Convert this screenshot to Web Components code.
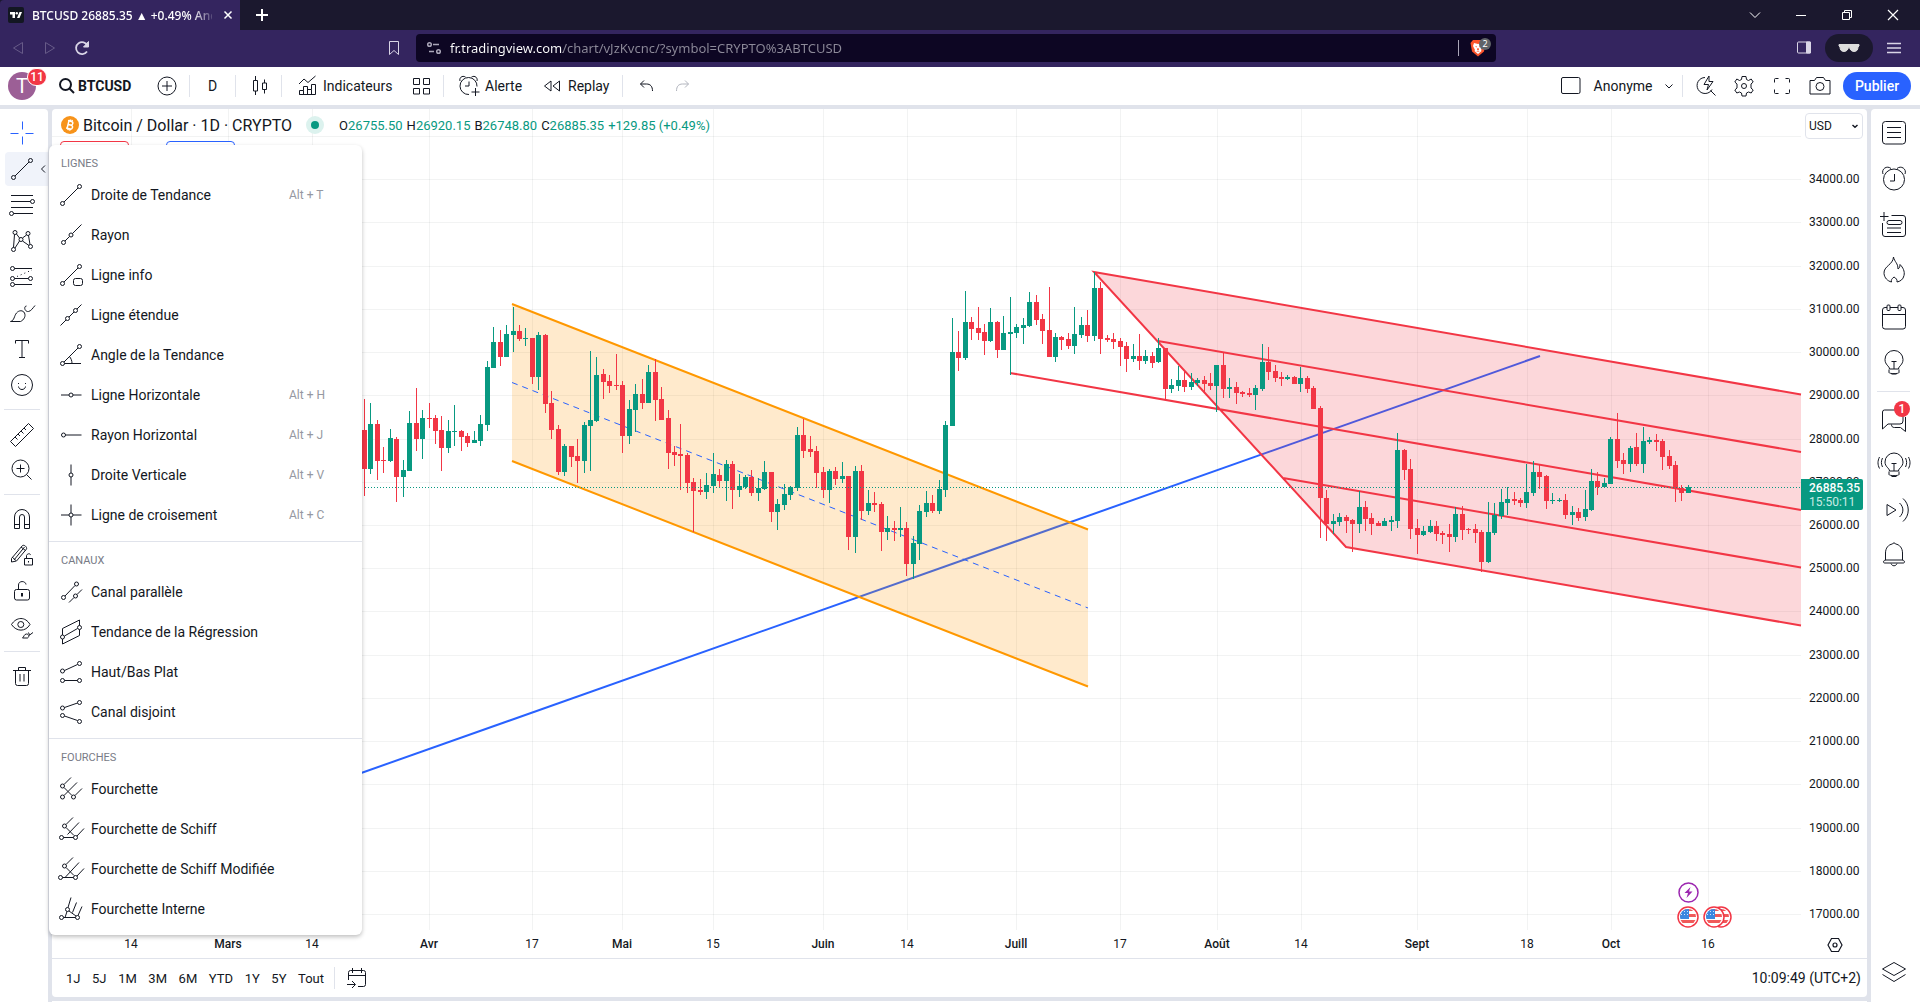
<!DOCTYPE html>
<html lang="fr">
<head>
<meta charset="utf-8">
<title>BTCUSD 26885.35 ▲ +0.49% Anonyme</title>
<style>
  html, body { margin: 0; height: 100%; }
  body {
    --ink: #131722; --line: #e0e3eb; --up: #089981; --down: #f23645; --blue: #2962ff;
    font-family: Roboto, "Liberation Sans", sans-serif; font-size: 14px; color: var(--ink);
    background: var(--line); overflow: hidden;
  }
</style>
</head>
<body>
<app-shell>
  <browser-tabs slot="top"></browser-tabs>
  <browser-bar slot="top"></browser-bar>
  <chart-header slot="top"></chart-header>
  <tool-rail slot="left"></tool-rail>
  <price-chart slot="main"></price-chart>
  <range-bar slot="main"></range-bar>
  <side-rail slot="right"></side-rail>
  <tool-menu slot="overlay">
    <menu-group heading="Lignes">
      <menu-entry icon="line" keys="Alt + T">Droite de Tendance</menu-entry>
      <menu-entry icon="ray">Rayon</menu-entry>
      <menu-entry icon="info">Ligne info</menu-entry>
      <menu-entry icon="extended">Ligne étendue</menu-entry>
      <menu-entry icon="angle">Angle de la Tendance</menu-entry>
      <menu-entry icon="hline" keys="Alt + H">Ligne Horizontale</menu-entry>
      <menu-entry icon="hray" keys="Alt + J">Rayon Horizontal</menu-entry>
      <menu-entry icon="vline" keys="Alt + V">Droite Verticale</menu-entry>
      <menu-entry icon="crossline" keys="Alt + C">Ligne de croisement</menu-entry>
    </menu-group>
    <menu-group heading="Canaux">
      <menu-entry icon="parallel">Canal parallèle</menu-entry>
      <menu-entry icon="regression">Tendance de la Régression</menu-entry>
      <menu-entry icon="flat">Haut/Bas Plat</menu-entry>
      <menu-entry icon="disjoint">Canal disjoint</menu-entry>
    </menu-group>
    <menu-group heading="Fourches">
      <menu-entry icon="fork">Fourchette</menu-entry>
      <menu-entry icon="schiff">Fourchette de Schiff</menu-entry>
      <menu-entry icon="schiffmod">Fourchette de Schiff Modifiée</menu-entry>
      <menu-entry icon="inside">Fourchette Interne</menu-entry>
    </menu-group>
  </tool-menu>
</app-shell>

<script>
const c = (x, y, r = 2) => `<circle cx="${x}" cy="${y}" r="${r}"/>`;
const p = d => `<path d="${d}"/>`;

/* Icons on a 28 unit square, drawn with a one unit stroke in the current colour. */
const ICONS = {
  line: c(5.5,22.5) + c(22.5,5.5) + p('M7 21 21 7'),
  ray: c(6.5,21.5) + c(14,14) + p('M8 20l4.5-4.5M15.500 12.500 24.500 3.500'),
  info: c(5.5,22.5) + c(22.5,5.5) + p('M7 21 21 7') + '<rect x="16.500" y="17.500" width="9" height="7" rx="2"/>',
  extended: c(10.5,17.5) + c(18.5,9.5) + p('M3.500 24.500 9 19M12 16l5-5M20 8l4.500-4.500'),
  angle: c(5.5,22.5) + c(22.5,5.5) + p('M7 21 21 7M7.500 22.500H24M15 22.500c0-3-1-5-2.500-7'),
  hline: c(14,14) + p('M4 14h8M16 14h8.500'),
  hray: c(6.5,14) + p('M8.500 14h16'),
  vline: c(14,14) + p('M14 3.500V12M14 16v8.500'),
  crossline: c(14,14) + p('M14 3.500V12M14 16v8.500M4 14h8M16 14h8.500'),
  parallel: c(6.5,19.5) + c(19.5,6) + c(18.5,18) + p('M8 18 18 7.500M12 24.500 17 19.500M20 16.500l5-5'),
  regression: c(5.5,19) + c(22.5,9.5) + p('M5.500 17v-6.500l17-8.500v5.500M22.500 11.500v6l-17 8.500v-5M7.500 18l13-7.500'),
  flat: c(5.5,13) + c(22.5,5.5) + c(5.5,22.5) + c(22.5,22.5) + p('M7.500 12.500 20.500 6.500M7.500 22.500h13'),
  disjoint: c(5.5,10) + c(22.5,4.5) + c(5.5,17.5) + c(22.5,23.5) + p('M7.500 9.500 20.500 5M7.500 18 20.500 22.500'),
  fork: c(5.5,11) + c(5.5,22) + c(16.5,22) + p('M7 9.500 14 2.500M7 12.500l8 8M7 20.500 20 7.500M18 20.500l7-7'),
  schiff: c(7.5,11) + c(4.5,22.5) + c(18.5,22.5) + p('M9 9.500 16 2.500M9 12.500l8 8M6.500 22.500h10M10.500 19.500 22 7.500M20 21l7-7.500'),
  schiffmod: c(7.5,11) + c(3.5,22.5) + c(18.5,22.5) + p('M9 9.500 16 2.500M9 12.500l8 8M5.500 22.500h11M8.500 22 22 7.500M20 21l7-7.500'),
  inside: c(10.5,14.5) + c(4.5,22.5) + c(20.5,22.5) + p('M11 12.500 14 2.500M12 16l7 5M6.500 22.500h12M8 22.500 10 16.500M15.500 17.500l4-10M21 20.500l4-9'),
  crosshair: p('M14.500 2.500v8M14.500 17.500v8M2.500 14.500h8M17.500 14.500h8'),
  fib: c(24.500,10.500) + c(3.500,22.500) + p('M3 4.500h22M3 10.500h19.500M3 16.500h22M5.500 22.500H25'),
  pattern: c(7,5.5) + c(20,6.5) + c(5.5,22.5) + c(22.5,19.500) + c(13,12.500) + p('M6.500 7.500 5.500 20.500M8.500 7 11.500 11M14.500 11 18.500 8M20.500 8.500 22 17.500M7 21 11.500 14M14.500 14 21 18.500'),
  forecast: c(4.5,5.5) + c(4.5,15.5) + c(4.5,21.5) + c(22.5,15.5) + p('M6.500 5.500H24M6.500 15.500H20.500M6.500 21.500H24') + '<path stroke-dasharray="1 3" d="M9 13.500 24 7"/>',
  brush: p('M2.500 22.500c4-1 3.500-5.500 6-8.500 2.500-3 6.500-3 8 0 1.500 3-.5 7-4 8.500zM27 6.500c-2.500 3-4 5.500-6.500 6s-4.500-2.500-3.500-4.500c.3-.7.7-1 1.500-1'),
  text: p('M7.500 8.500v-3h13v3M14 5.500v17M11 22.500h6'),
  smile: c(14,14,10.500) + p('M10.500 15.500c.5 4 6.500 4 7 0M10.500 12v1M17.500 12v1'),
  ruler: p('M2.500 21.500 20.500 3.500l5 5-18 18zM7 17l2.500 2.500M10 14l2 2M13 11l2.500 2.500M16 8l2 2'),
  zoom: c(12.5,12.5,8.5) + p('M12.500 8.500v8M8.500 12.500h8M18.500 18.500l5 5'),
  magnet: p('M6.500 23.500V12a7.500 7.500 0 0 1 15 0v11.500h-5V12a2.500 2.500 0 0 0-5 0v11.500zM6.500 19.500h5M16.500 19.500h5'),
  pencillock: p('M3.500 17.500 14.500 4.500c1.500-1 5 1.500 4 3.500L8.500 20l-5 1zM6 19 16.500 6M4 16l4 3.500M13 6l4.500 3.500M16.500 17.500h8v6.500h-8zM18.500 17.500v-3c1-2.500 4-2 4-.5M20.500 20v1.500'),
  lock: p('M10.500 12.500V8c0-4.500 7-4.500 7.500-.5') + '<rect x="6.500" y="12.500" width="15" height="10.500" rx="2"/><path stroke-width="2" d="M14 16v3.500"/>',
  eye: p('M3.500 11.500c5-8 14-8 18.500 0-4.500 7.500-13.500 7.500-18.500 0z') + c(12.8,11.500,3) + p('M14.500 25c1.500-1 1.500-4 4-4s3 3 1 4zM25 19.500l-4 3M20.500 19.500l1 2.500'),
  trash: p('M5 8.500h18M7.500 8.500v13a2 2 0 0 0 2 2h9a2 2 0 0 0 2-2v-13M10.500 8.500v-3h7v3M12 12v7.500M16 12v7.500'),
  search: '<g stroke-width="2">' + c(12.500,12.500,5.5) + p('M16.500 16.500l4.500 4.500') + '</g>',
  plus: c(14,14,9) + p('M14 9v10M9 14h10'),
  candles: p('M10.500 4v4.500M10.500 19v4M8.500 8.500h4v10.500h-4zM19.500 7.500v3.500M19.500 17.500v4M17.500 11h4v6.500h-4z'),
  indicators: p('M6 12l5-5 4 3.500L22.500 4M6.500 22.500v-4h4v4zM10.500 18.500v-4h4v8M14.500 17.500h4v5M18.500 17.500v-5h4v10H6.500'),
  grid: p('M6.500 6.500h6v6h-6zM16.500 6.500h6v6h-6zM6.500 16.500h6v5.500h-6zM16.500 16.500h6v5.500h-6z'),
  alert: p('M22 14.500A8.500 8.500 0 1 0 14 22.500M5 9c-1-3 2-6 5.500-4M22 9c1-3-2-6-5.500-4M14 9.500V14h-4M20.500 16v8M16.500 20h8'),
  replay: p('M13 9v10l-6.500-5zM21.500 9v10L15 14z'),
  undo: p('M12 8.500 8.500 12l3.500 3.500M8.500 12h6c4 0 6 2.500 6 7'),
  redo: p('M16 8.500l3.500 3.500-3.500 3.500M19.500 12h-6c-4 0-6 2.500-6 7'),
  layout: '<rect x="4.500" y="5.500" width="18.500" height="16" rx="1.500"/>',
  down: p('M10.500 12.500 14 16l3.500-3.500'),
  quick: p('M13 5.500a8 8 0 1 0 7 12M18.500 18.500l5 5M17 4l-5 8.500h4.500L15 18l6-8.500h-4z'),
  gear: p('M12 4.500h4l.5 3 2 1 2.700-1.500 2 3L21 12v4l2.200 2-2 3-2.700-1-2 1-.5 3h-4l-.5-3-2-1-2.700 1-2-3L7 16v-4L4.800 10l2-3 2.700 1.500 2-1z') + c(14,14,2.5),
  full: p('M10.500 6.500h-3a1 1 0 0 0-1 1v3M17.500 6.500h3a1 1 0 0 1 1 1v3M10.500 21.500h-3a1 1 0 0 1-1-1v-3M17.500 21.500h3a1 1 0 0 0 1-1v-3'),
  camera: p('M4 8.500h4.500l2-3h7l2 3H24v13.500H4z') + c(14,14.5,4),
  list: '<rect x="2.500" y="2.500" width="23" height="22.500" rx="3"/>' + p('M7 8.500h14M7 13.500h14M7 18.500h14'),
  alarm: c(14,14.5,10.5) + p('M14.500 9v7H10M3 9c-2-5 4-9 8-5.500M25 9c2-5-4-9-8-5.500'),
  watch: p('M11.500 4.500H23a2.500 2.500 0 0 1 2.500 2.500v16a2.500 2.500 0 0 1-2.500 2.500H5A2.500 2.500 0 0 1 2.500 23V12M4 1v9M0 5.500h8.500M7 17h14M7 21.500h14') + '<rect x="7" y="9.500" width="15" height="4" rx="2"/>',
  flame: p('M13.500 0c1 5 4.500 6 4.500 12 1.500-1 2-2 2-4.500 3 3 5 7 4 11-.7 4-4 6-7 6.500.5-2-1-4-3-5-2.500 2-3 3-2.500 5-4-1-7-4-7.500-8.500C3.500 9 13 8 13.500 0z'),
  calendar: '<rect x="2.500" y="4.500" width="23" height="21.500" rx="2.500"/>' + p('M2.500 11.500h23') + '<g fill="#fff"><rect x="7" y="2" width="3" height="5.500" rx="1"/><rect x="18" y="2" width="3" height="5.500" rx="1"/></g>',
  bulb: p('M9.500 20c0-3-4.500-4-4.500-9.500a9 9 0 0 1 18 0c0 5.500-4.500 6.500-4.500 9.500zM9 20.500v3c0 1.500 10 1.500 10 0v-3M11.500 25h5M14 12.500V20M11.500 12.500h5'),
  chat: p('M2.500 23V6a2 2 0 0 1 2-2H21a2 2 0 0 1 2 2v9a3 3 0 0 1-3 3H8zM11.500 18.500c0 2 1 3 3 3h6l5 4V11'),
  stream: p('M9.500 20c0-3-4.500-4-4.500-9a9 9 0 0 1 18 0c0 5-4.500 6-4.500 9zM9 20.500v3c0 1.500 10 1.500 10 0v-3M11.500 25.500h5M14 12.500V20M11.500 12.500h5M2.500 7c-1.500 3-1.500 6 0 9M25.500 7c1.500 3 1.500 6 0 9M-.5 6c-2 4-2 7.500 0 11.500M28.500 6c2 4 2 7.500 0 11.500'),
  cast: p('M7 8.500v11l9-5.500zM19.500 7c4.500 4 4.500 10 0 14M23 2.500c7 6 7 17 0 23'),
  bell: p('M5.500 19V12c0-5 3-8.500 7-9 .5-1.500 2.500-1.500 3 0 4 .5 7 4 7 9v7M6 19h16c3 0 3 3 1.500 3H4.500C3 22 3 19 6 19zM11 22.500c1 3 5 3 6 0'),
  layers: p('M14 3.500 25.500 10 14 16.500 2.500 10zM2.500 15.500 14 22.500l11.500-7'),
  goto: p('M5.500 16V8.500a2 2 0 0 1 2-2h13a2 2 0 0 1 2 2v12a2 2 0 0 1-2 2H15M5.500 11.500h17M9.500 4v5M18.500 4v5M4 20.500h8M9 17l3.500 3.500L9 24'),
  bookmark: p('M9.500 7.500h9v13l-4.500-4-4.500 4z'),
  back: p('M18.500 8.500v11L9.500 14z'),
  forward: p('M9.500 8.500v11l9-5.500z'),
  reload: '<path stroke-width="1.800" d="M19 17.500a6 6 0 1 1 .5-6"/><path fill="currentColor" d="M20.500 7.500v5.500h-5z"/>',
  tune: '<g stroke-width="1.500">' + c(9.500,10.500,1.800) + c(18.500,17.500,1.800) + p('M13 10.500h6M9 17.500h5') + '</g>',
  panel: '<rect x="7.500" y="8" width="13" height="11" rx="1"/><path fill="currentColor" d="M16.500 8h4v11h-4z"/>',
  burger: '<path stroke-width="1.300" d="M7 9.500h14M7 14h14M7 18.500h14"/>',
  glasses: '<path fill="currentColor" d="M4 10.500h20v1.500l-1 1c0 3-1.500 4.500-4 4.500s-4-2-4.500-4h-1c-.5 2-2 4-4.500 4s-4-1.500-4-4.500l-1-1z"/>',
  chevron: p('M9 11.500l5 5 5-5'),
  minimize: p('M9 14.500h10'),
  restore: p('M9.500 11.500h7v7h-7zM11.500 11.500v-2h7v7h-2'),
  close: '<path stroke-width="1.200" d="M9 9l10 10M19 9 9 19"/>',
  closetab: '<path stroke-width="1.500" d="M10.500 10.500l7 7M17.500 10.500l-7 7"/>',
  newtab: '<path stroke-width="2" d="M14 8v12M8 14h12"/>',
  arrowleft: p('M16 10.500 12.500 14l3.500 3.500'),
  hexgear: '<g stroke-width="1.200">' + p('M10.500 7.500h7L21 14l-3.500 6.500h-7L7 14z') + c(14,14,2) + '</g>'
};

const RESET = `
  button { font: inherit; color: inherit; background: none; border: 0; padding: 0; margin: 0; cursor: pointer;
    display: flex; align-items: center; justify-content: center; white-space: nowrap; }
`;

function define(name, render) {
  customElements.define(name, class extends HTMLElement {
    connectedCallback() {
      if (this.shadowRoot) return;
      this.attachShadow({ mode: 'open' }).innerHTML = render(this);
    }
  });
}

define('ui-icon', el => `
  <style>:host { display: block; flex: none; width: 28px; height: 28px; } svg { display: block; overflow: visible; }</style>
  <svg width="28" height="28" viewBox="0 0 28 28" fill="none" stroke="currentColor" aria-hidden="true">${ICONS[el.getAttribute('name')]}</svg>`);

const icon = name => `<ui-icon name="${name}"></ui-icon>`;
const iconButton = (name, label, cls = '') => `<button class="${cls}" aria-label="${label}">${icon(name)}</button>`;

define('app-shell', () => `
  <style>
    :host { display: flex; flex-direction: column; height: 100vh; position: relative; }
    .body { flex: 1; display: flex; gap: 4px; padding-top: 4px; min-height: 0; }
    .main { flex: 1; min-width: 0; display: flex; flex-direction: column; }
    .next { margin-top: 4px; height: 1px; background: #fff; }
  </style>
  <slot name="top"></slot>
  <div class="body">
    <slot name="left"></slot>
    <div class="main"><slot name="main"></slot><div class="next"></div></div>
    <slot name="right"></slot>
  </div>
  <slot name="overlay"></slot>`);

define('browser-tabs', () => `
  <style>${RESET}
    :host { display: flex; height: 30px; background: #1b182e; color: #fff; font-family: "Noto Sans", sans-serif; font-size: 12px; }
    .tab { width: 240px; box-sizing: border-box; background: #34255f; padding-left: 8px; display: flex; align-items: center; border-radius: 4px 0 0 0; }
    .tab svg { flex: none; }
    .title { margin-left: 8px; width: 180px; white-space: nowrap; font-weight: 500;
      -webkit-mask-image: linear-gradient(90deg, #000 160px, transparent 184px); }
    .tab button { width: 24px; margin-left: auto; }
    .new { width: 44px; }
    .win { margin-left: auto; display: flex; padding-right: 4px; }
    .win button { width: 46px; }
  </style>
  <div class="tab">
    <svg width="16" height="16" viewBox="0 0 16 16" aria-hidden="true"><rect width="16" height="16" rx="2" fill="#131722"/><path fill="#fff" d="M2 5h5v6H4.500V7.500H2zM11.500 5H14l-2.500 6H9z"/><circle cx="8.800" cy="6.200" r="1.200" fill="#fff"/></svg>
    <span class="title">BTCUSD 26885.35 ▲ +0.49% Anc</span>
    ${iconButton('closetab', 'Fermer l’onglet')}
  </div>
  ${iconButton('newtab', 'Nouvel onglet', 'new')}
  <div class="win">${iconButton('chevron', 'Rechercher')}${iconButton('minimize', 'Réduire')}${iconButton('restore', 'Restaurer')}${iconButton('close', 'Fermer')}</div>`);

define('browser-bar', () => `
  <style>${RESET}
    :host { display: flex; align-items: center; height: 37px; background: #34255f; color: #d9d5e6; font-family: "Noto Sans", sans-serif; font-size: 13px; padding: 0 5px 2px 2px; box-sizing: border-box; }
    button { width: 32px; height: 28px; }
    .dim { color: #675b88; }
    .mark { margin-left: auto; width: 44px; }
    .url { width: 1080px; height: 28px; border-radius: 4px; background: #0d0623; display: flex; align-items: center; box-sizing: border-box; padding: 0 10px 0 4px; margin-right: 18px; color: #aaa6b8; }
    input { flex: 1; min-width: 0; border: 0; outline: 0; padding: 0 0 0 2px; font: inherit; color: #8d8a99;
      background: linear-gradient(90deg, #fff 115px, #8d8a99 115px); -webkit-background-clip: text; background-clip: text; -webkit-text-fill-color: transparent; }
    .sep { width: 1px; height: 16px; background: #aaa6b8; margin-right: 11px; }
    .shield { position: relative; width: 16px; height: 18px; }
    .shield b { position: absolute; left: 9px; top: -1px; width: 12px; height: 12px; border-radius: 6px; background: #5f6368; color: #fff; font: 9px/12px "Noto Sans", sans-serif; text-align: center; }
    .right { margin-left: auto; display: flex; align-items: center; }
    .pill { width: 48px; border-radius: 14px; background: #1b182e; color: #ddd; margin: 0 0 0 5px; }
    .right .menu { width: 42px; }
  </style>
  ${iconButton('back', 'Précédent', 'dim')}${iconButton('forward', 'Suivant', 'dim')}${iconButton('reload', 'Recharger')}
  ${iconButton('bookmark', 'Favori', 'mark')}
  <div class="url">${icon('tune')}<input aria-label="Adresse" value="fr.tradingview.com/chart/vJzKvcnc/?symbol=CRYPTO%3ABTCUSD">
    <span class="sep"></span>
    <button class="shield" aria-label="Brave Shields"><svg width="16" height="18" viewBox="0 0 16 18"><path fill="#fb542b" d="M3 1h10l2.500 3L14 12.500 8 17.500 2 12.500.5 4z"/><path fill="#fff" d="M4 4l4 1 4-1 1 3-2 4 .5 1L8 15l-3.500-3L5 11 3 7z"/><path fill="#fb542b" d="M5 7l2 .5-.5 1zM11 7l-2 .5.5 1zM7.500 9h1l.5 2-1 .5-1-.5zM6 12l2 1 2-1-2 .3z"/></svg><b>2</b></button>
  </div>
  <div class="right">${iconButton('panel', 'Panneau')}${iconButton('glasses', 'Navigation privée', 'pill')}${iconButton('burger', 'Menu', 'menu')}</div>`);

define('chart-header', () => `
  <style>${RESET}
    :host { display: flex; align-items: center; height: 38px; background: #fff; box-sizing: border-box; padding-right: 9px; }
    button { height: 38px; width: 45px; }
    i { width: 1px; height: 22px; background: var(--line); flex: none; }
    .avatar { position: relative; width: 48px; justify-content: flex-start; padding-left: 8px; box-sizing: border-box; }
    .avatar span { width: 28px; height: 28px; border-radius: 14px; background: #9c5f96; color: #fff; font-size: 20px; line-height: 28px; text-align: center; }
    .avatar b { position: absolute; left: 27px; top: 1px; width: 18px; height: 16px; border-radius: 9px; background: var(--down); color: #fff; font-size: 12px; line-height: 16px; font-weight: 500; border: 1px solid #fff; }
    .search { width: 96px; padding-left: 5px; box-sizing: border-box; justify-content: flex-start; font-weight: 700; }
    .search ui-icon { margin-right: -3px; }
    .left { justify-content: flex-start; box-sizing: border-box; padding-left: 11px; gap: 2px; }
    .ind { width: 116px; } .al { width: 86px; } .rp { width: 92px; padding-left: 8px; }
    .redo { width: 30px; color: #b2b5be; }
    .right { margin-left: auto; display: flex; align-items: center; }
    .right button { width: 38px; }
    .right .name { width: 66px; }
    .right .drop { width: 26px; }
    .right .pub { width: 68px; height: 28px; border-radius: 14px; background: var(--blue); color: #fff; font-weight: 500; margin-left: 4px; }
    .right i { margin: 0 4px 0 0; }
  </style>
  <button class="avatar" aria-label="Compte"><span>T</span><b>11</b></button>
  <button class="search">${icon('search')}BTCUSD</button>
  ${iconButton('plus', 'Comparer')}<i></i><button>D</button><i></i>${iconButton('candles', 'Bougies')}<i></i>
  <button class="left ind">${icon('indicators')}Indicateurs</button>${iconButton('grid', 'Modèles')}<i></i>
  <button class="left al">${icon('alert')}Alerte</button><button class="left rp">${icon('replay')}Replay</button><i></i>
  ${iconButton('undo', 'Annuler')}${iconButton('redo', 'Rétablir', 'redo')}
  <div class="right">${iconButton('layout', 'Disposition')}<button class="name">Anonyme</button>${iconButton('down', 'Gérer', 'drop')}<i></i>
    ${iconButton('quick', 'Recherche rapide')}${iconButton('gear', 'Réglages')}${iconButton('full', 'Plein écran')}${iconButton('camera', 'Capture')}
    <button class="pub">Publier</button></div>`);

define('tool-rail', () => `
  <style>${RESET}
    :host { display: flex; flex-direction: column; width: 48px; background: #fff; border-radius: 0 4px 0 0; box-sizing: border-box; padding-top: 6px; }
    button { height: 36px; width: 44px; flex: none; }
    .active { width: 43px; height: 34px; margin: 1px 0 1px 5px; border-radius: 4px 0 0 4px; background: #f0f3fa; justify-content: flex-start; padding-left: 3px; box-sizing: border-box; }
    .active ui-icon + ui-icon { margin-left: -7px; }
    .cross { color: var(--blue); }
    i { height: 1px; margin: 6px 8px 6px 4px; background: var(--line); flex: none; }
  </style>
  ${iconButton('crosshair', 'Curseur', 'cross')}
  <button class="active" aria-label="Outils de ligne">${icon('line')}${icon('arrowleft')}</button>
  ${[['fib','Fibonacci'],['pattern','Figures'],['forecast','Prévision'],['brush','Pinceau'],['text','Texte'],['smile','Icônes']].map(a => iconButton(...a)).join('')}
  <i></i>${iconButton('ruler', 'Mesurer')}${iconButton('zoom', 'Zoomer')}<i></i>
  ${[['magnet','Aimant'],['pencillock','Mode dessin'],['lock','Verrouiller'],['eye','Masquer']].map(a => iconButton(...a)).join('')}
  <i></i>${iconButton('trash', 'Supprimer')}`);

define('side-rail', () => `
  <style>${RESET}
    :host { display: flex; flex-direction: column; width: 49px; background: #fff; border-radius: 4px 0 0 0; box-sizing: border-box; padding: 1px 0 7px; }
    button { height: 46px; width: 46px; flex: none; position: relative; }
    i { height: 1px; margin: 5px 10px 5px 6px; background: var(--line); flex: none; }
    i ~ button { height: 45px; }
    .last { margin-top: auto; }
    b { position: absolute; left: 23px; top: 4px; width: 16px; height: 16px; border-radius: 8px; background: var(--down); color: #fff; font-size: 12px; line-height: 16px; font-weight: 500; }
  </style>
  ${[['list','Liste de suivi'],['alarm','Alertes'],['watch','Données'],['flame','Tendances'],['calendar','Calendrier'],['bulb','Idées']].map(a => iconButton(...a)).join('')}
  <i></i>
  <button aria-label="Discussions">${icon('chat')}<b>1</b></button>
  ${[['stream','Flux d’idées'],['cast','Diffusions'],['bell','Notifications'],['layers','Arbre des objets','last']].map(a => iconButton(...a)).join('')}`);

define('tool-menu', () => `
  <style>
    :host { display: block; position: absolute; left: 49px; top: 145px; width: 313px; box-sizing: border-box; background: #fff; border-radius: 6px; box-shadow: 0 2px 4px rgba(0,0,0,.25); }
  </style>
  <slot></slot>`);

define('menu-group', el => `
  <style>
    :host { display: block; padding: 6px 0; border-top: 1px solid var(--line); }
    :host(:first-child) { border-top: 0; }
    h3 { margin: 0; padding: 2px 0 0 12px; font-size: 11px; line-height: 22px; font-weight: 400; color: #787b86; text-transform: uppercase; }
  </style>
  <h3>${el.getAttribute('heading')}</h3><slot></slot>`);

define('menu-entry', el => `
  <style>${RESET}
    :host { display: block; }
    button { width: 100%; height: 40px; padding: 0 37px 0 8px; justify-content: flex-start; gap: 6px; text-align: left; }
    span { flex: 1; }
    kbd { font: inherit; font-size: 12px; color: #9598a1; width: 36px; }
  </style>
  <button>${icon(el.getAttribute('icon'))}<span><slot></slot></span>${el.hasAttribute('keys') ? `<kbd>${el.getAttribute('keys')}</kbd>` : ''}</button>`);

define('range-bar', () => `
  <style>${RESET}
    :host { display: flex; align-items: center; height: 38px; border-top: 1px solid var(--line); background: #fff; border-radius: 0 0 4px 4px; padding: 0 6px 0 8px; font-size: 13px; }
    .ranges { display: flex; width: 258px; padding-left: 6px; justify-content: space-between; }
    .ranges button { height: 30px; }
    i { width: 1px; height: 22px; margin: 0 8px 0 10px; background: var(--line); }
    .clock { margin-left: auto; font-size: 14px; }
  </style>
  <div class="ranges">${['1J','5J','1M','3M','6M','YTD','1Y','5Y','Tout'].map(t => `<button>${t}</button>`).join('')}</div>
  <i></i>${iconButton('goto', 'Aller à')}
  <button class="clock">10:09:49 (UTC+2)</button>`);

/* Candles: high, body top, body bottom, low, in thirds of a pixel below the base of each run; R falls, G rises. */
const RUNS = [
  [280, `357,450,567,648R 369,432,567,582G 420,432,543,600R 501,540,543,579R 447,474,543,546G 471,477,591,666R 540,570,591,651G 393,429,573,573G 324,429,477,513R 390,414,477,537G
  369,414,417,444R 405,414,453,492R 408,450,504,573R 420,453,504,519G 375,453,456,498G 450,453,471,513R 459,468,489,501R 453,480,489,489G 405,432,483,498G 243,261,435,453G
  141,186,264,264G 150,186,231,258R 135,162,231,231G 81,153,165,216G 135,153,177,183R 144,174,177,198G 174,174,291,312R 156,165,291,330G 162,165,372,399R 333,369,450,477R
  435,447,576,585R 492,498,576,588G 498,498,531,561R 477,528,543,609R 426,435,543,579G 213,420,438,573G 231,285,423,426G 267,282,306,357R 285,303,318,339R 222,315,318,330R
  303,315,468,519R 360,387,468,492G 312,342,390,456G 297,342,369,387R 255,276,369,369G 237,276,360,423R 321,357,420,420R 390,414,519,567R 498,516,525,558R 432,522,528,630R 519,525,609,639R`],
  [340, `414,426,453,576R 417,450,456,465R 399,435,456,477G 339,402,438,459G 387,405,423,444R 360,372,423,483G 363,372,450,507R 402,438,450,471G 405,411,441,447G 390,411,459,468R
  414,444,459,483G 363,396,447,450G 396,396,516,546R 477,492,516,570G 432,462,495,510G 438,441,465,480G 261,285,444,453G 237,285,333,354R 288,327,336,351R 318,333,399,444R
  381,396,450,474R 387,393,450,489G 381,393,417,435R 366,408,417,429G 408,408,591,630R 378,393,591,639G 375,393,513,540R 450,489,513,525G 456,489,495,516R 486,492,576,633R
  528,564,576,600G 543,564,570,603R 501,564,570,591G 546,564,672,708R 588,609,672,717G 495,513,612,660G 453,489,516,531G 465,489,513,519R 420,447,513,522G 243,255,450,471G`],
  [260, `174,276,498,498G 213,276,294,333R 93,186,294,300G 171,186,207,240R 141,204,219,240R 192,216,243,285R 144,186,243,246G 183,186,270,294R 168,219,270,270G 111,216,222,345G
  192,201,219,234G 174,195,204,252G 96,126,198,201G 105,126,180,195R 162,177,213,252R 81,210,291,291R 219,231,291,306G 228,231,240,270R 219,237,258,267R 141,222,258,282G
  171,195,225,234G 150,195,228,246R 36,84,228,243G 66,84,237,282R 225,234,240,246R 219,237,246,267R 234,243,261,318R 246,258,297,336R 252,288,297,306G 222,288,303,330R
  270,288,303,312G 276,288,309,324R 234,264,306,309G 264,264,387,420R 357,375,387,399G 318,360,378,393G 333,360,381,396R 339,366,381,390G 354,360,369,378G 348,360,372,396R
  339,369,378,390R 315,315,378,456G 276,315,387,414R 354,381,387,414G 366,381,399,432R 393,396,402,411R 384,399,405,411R 375,384,405,450G`],
  [320, `72,126,207,213G 81,126,156,180R 135,153,174,186R 156,171,177,198R 165,171,177,180G 168,171,192,192R 141,174,192,216G 168,174,207,219R 198,204,267,267R 258,264,534,654R
  510,534,612,663R 582,603,612,642G 579,591,606,618G 585,591,603,639R 597,600,612,696R 513,561,612,639G 543,561,597,633R 579,594,612,645R 603,609,618,618R 594,603,618,618G
  588,600,606,633G 339,390,603,624G 387,390,450,480R 417,447,627,657R 597,624,645,702R 618,633,645,648G 600,618,636,639G 603,618,642,663R 633,639,645,672R 612,642,651,696R
  561,582,651,666G 558,582,630,660R 624,627,630,642R 612,627,639,669R 630,636,726,756R 546,636,726,729G 549,585,639,645G 507,546,588,597G 501,537,549,585G 516,537,543,555R
  534,540,549,561R 432,516,549,564G 423,456,519,528G 435,456,471,507R 465,468,543,567R`],
  [390, `309,330,333,342G 324,330,333,336G 312,330,375,387R 348,366,375,405G 354,366,384,393R 300,357,381,393G 237,273,360,363G 246,273,291,315R 264,279,291,294G 141,147,282,282G
  69,147,213,234R 189,210,222,252R 168,174,222,246G 129,171,222,228R 111,153,222,249G 141,150,156,162G 132,150,156,183R 147,153,201,240R 180,198,228,237R 213,225,297,336R
  285,294,309,333R 285,291,309,309G`]
];

function candles() {
  let i = 0, up = '', down = '';
  for (const [base, rows] of RUNS) for (const row of rows.trim().split(/\s+/)) {
    const [h, t, b, l] = row.slice(0, -1).split(',').map(v => base + Math.round(v / 3));
    const x = Math.round(364 + 6.458 * i++);
    const d = `M${x} ${h}h1V${l}h-1zM${x - 2} ${t}h5V${b}h-5z`;
    if (row.endsWith('G')) up += d; else down += d;
  }
  return `<path fill="#089981" d="${up}"/><path fill="#f23645" d="${down}"/>`;
}

const TIMES = [[131,'14'],[228,'Mars',1],[312,'14'],[429,'Avr',1],[532,'17'],[622,'Mai',1],[713,'15'],[823,'Juin',1],[907,'14'],[1016,'Juill',1],[1120,'17'],[1217,'Août',1],[1301,'14'],[1417,'Sept',1],[1527,'18'],[1611,'Oct',1],[1708,'16']];
const gridY = k => Math.round(136 + 43.22 * k);

const flag = (x, id) => `<g><circle cx="${x}" cy="917" r="10" fill="#fff" stroke="#f23645" stroke-width="1.500"/>
  <clipPath id="${id}"><circle cx="${x}" cy="917" r="8"/></clipPath>
  <g clip-path="url(#${id})"><path fill="#fff" d="M${x - 8} 909h16v16h-16z"/><path fill="#f05a5a" d="M${x - 8} 909h16v2h-16zM${x - 8} 914h16v3h-16zM${x - 8} 920h16v3h-16z"/><path fill="#3a87e0" d="M${x - 8} 909h9v10h-9z"/>
  <path stroke="#cfe2fa" stroke-dasharray="1 2" d="M${x - 7} 911.500h7M${x - 7} 914.500h7"/></g></g>`;

define('price-chart', () => `
  <style>
    :host { display: block; flex: 1; min-height: 0; position: relative; background: #fff; border-radius: 4px 4px 0 0; overflow: hidden; }
    svg.plot { position: absolute; inset: 0; width: 100%; height: 100%; font-size: 12px; }
    .legend { position: relative; display: flex; align-items: center; height: 20px; padding: 6px 0 0 9px; white-space: nowrap; }
    h1 { margin: 0 14px 0 4px; font-size: 16px; font-weight: 400; }
    .halo { width: 18px; height: 18px; border-radius: 9px; background: #dcf2ee; display: grid; place-items: center; margin-right: 15px; }
    .halo::before { content: ""; width: 8px; height: 8px; border-radius: 4px; background: var(--up); }
    .ohlc { display: flex; gap: 4px; font-size: 13px; }
    .ohlc b { font-weight: 400; color: var(--up); }
    .trade { position: relative; display: flex; gap: 37px; padding: 6px 0 0 8px; }
    .trade button { width: 69px; height: 40px; box-sizing: border-box; border: 1px solid var(--down); border-radius: 4px; background: #fff; }
    .trade button + button { border-color: var(--blue); }
    .unit { position: absolute; right: 4px; top: 4px; width: 58px; height: 26px; }
    .unit select { appearance: none; width: 100%; height: 100%; border: 1px solid var(--line); border-radius: 4px; background: #fff; font: inherit; font-size: 12px; color: var(--ink); padding: 0 0 0 3px; }
    .unit svg { position: absolute; right: 4px; top: 9px; pointer-events: none; }
  </style>
  <svg class="plot" viewBox="52 109 1815 849" preserveAspectRatio="xMaxYMin" fill="none">
    <path stroke="rgba(42,46,57,.06)" d="${Array.from({ length: 19 }, (_, k) => `M52 ${gridY(k)}.5H1801`).join('')}${TIMES.map(t => `M${t[0]}.5 109V930`).join('')}"/>
    <path stroke="#2962ff" stroke-width="2" d="M340 780.500 1540 356"/>
    <path fill="#ff9800" fill-opacity=".2" d="M512 304 1088 529.500V686.500L512 461z"/>
    <path stroke="#2962ff" stroke-dasharray="6 5" d="M512 382.500 1088 608"/>
    <path stroke="#ff9800" stroke-width="2" d="M512 304 1088 529.500M512 461 1088 686.500"/>
    <path fill="#f23645" fill-opacity=".2" d="M1094 272 1801 394.500V625.500L1346 547z"/>
    <path stroke="#f23645" stroke-width="2" d="M1801 394.500 1094 272 1346 547 1801 625.500M1158 341 1801 452M1010 373 1801 510M1283 478 1801 567.500"/>
    ${candles()}
    <path stroke="#089981" stroke-dasharray="1 2" d="M365 487.500H1801"/>
    <g fill="#131722">
      ${Array.from({ length: 18 }, (_, k) => `<text x="1809" y="${gridY(k + 1) + 4}">${34000 - k * 1000}.00</text>`).join('')}
      ${TIMES.map(([x, t, m]) => `<text x="${x}" y="948" text-anchor="middle"${m ? ' font-weight="500"' : ''}>${t}</text>`).join('')}
    </g>
    <path fill="#089981" d="M1801 479h60a2 2 0 0 1 2 2v27a2 2 0 0 1-2 2h-60z"/>
    <text x="1809" y="492" fill="#fff" font-weight="500">26885.35</text>
    <text x="1809" y="506" fill="#c9ebe4">15:50:11</text>
    <circle cx="1688.500" cy="892.500" r="9.500" fill="#fff" stroke="#9c27b0" stroke-width="1.500"/>
    <path fill="#9c27b0" d="M1690.500 887l-6 6h3.500l-1.500 5 6-6.500h-3.500z"/>
    ${flag(1721, 'f3')}${flag(1714, 'f2')}${flag(1688, 'f1')}
    <g transform="translate(1821 931)" stroke="#131722">${ICONS.hexgear}</g>
  </svg>
  <div class="legend">
    <svg width="18" height="18" viewBox="0 0 18 18" aria-hidden="true"><circle cx="9" cy="9" r="9" fill="#f7931a"/><g transform="rotate(14 9 9)" fill="none" stroke="#fff" stroke-width="1.500"><path d="M7 5v8M6 5.200h3.500a1.800 1.800 0 0 1 0 3.700H7h3a2 2 0 0 1 0 4H6M8.200 3.500v1.500M10 3.500v1.500M8.200 13v1.500M10 13v1.500"/></g></svg>
    <h1>Bitcoin / Dollar · 1D · CRYPTO</h1><span class="halo"></span>
    <div class="ohlc"><span>O<b>26755.50</b></span><span>H<b>26920.15</b></span><span>B<b>26748.80</b></span><span>C<b>26885.35</b></span><b>+129.85 (+0.49%)</b></div>
  </div>
  <div class="trade"><button aria-label="Vendre"></button><button aria-label="Acheter"></button></div>
  <label class="unit"><select aria-label="Devise"><option>USD</option></select><svg width="8" height="8" viewBox="0 0 8 8" fill="none" stroke="#131722" stroke-width="1.500"><path d="M1.500 3 4 5.200 6.500 3"/></svg></label>`);
</script>
</body>
</html>
